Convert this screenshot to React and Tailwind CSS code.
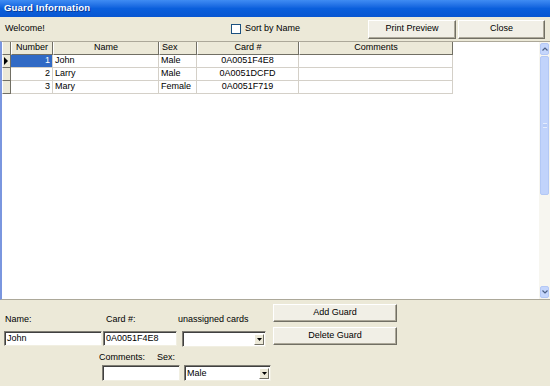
import { useState } from "react";

const guards = [
  { number: 1, name: "John", sex: "Male", card: "0A0051F4E8", comments: "" },
  { number: 2, name: "Larry", sex: "Male", card: "0A0051DCFD", comments: "" },
  { number: 3, name: "Mary", sex: "Female", card: "0A0051F719", comments: "" },
];

function Button({ children, className = "" }) {
  return (
    <button
      className={`flex items-center justify-center bg-[#f1efe6] border border-t-white border-l-white border-r-[#716f64] border-b-[#716f64] shadow-[inset_-1px_-1px_0_#aca899] text-black ${className}`}
    >
      {children}
    </button>
  );
}

function TextBox({ value, className = "" }) {
  return (
    <div
      className={`h-[15px] bg-white border border-t-[#7f7d74] border-l-[#7f7d74] border-r-[#f1efe2] border-b-[#f1efe2] shadow-[inset_1px_1px_0_#404040] pl-[2px] flex items-center leading-none ${className}`}
    >
      {value}
    </div>
  );
}

function Combo({ value, className = "" }) {
  return (
    <div
      className={`h-[16px] bg-white border border-t-[#7f7d74] border-l-[#7f7d74] border-r-[#f1efe2] border-b-[#f1efe2] shadow-[inset_1px_1px_0_#404040] flex items-center leading-none ${className}`}
    >
      <span className="flex-1 pl-[2px]">{value}</span>
      <span className="w-[10px] h-[11px] mr-[1px] bg-[#ece9d8] border border-t-white border-l-white border-r-[#716f64] border-b-[#716f64] flex items-center justify-center">
        <svg width="5" height="3" viewBox="0 0 5 3">
          <path d="M0 0h5L2.5 3z" fill="#000" />
        </svg>
      </span>
    </div>
  );
}

function HeaderCell({ children, w, align = "center" }) {
  return (
    <div
      className={`${w} h-full flex items-center px-[2px] bg-[#ece9d8] border-l border-l-white border-r border-r-[#716f64] border-b border-b-[#716f64] ${
        align === "left" ? "justify-start" : "justify-center"
      }`}
    >
      {children}
    </div>
  );
}

export default function App() {
  const [sortByName, setSortByName] = useState(false);

  return (
    <div
      className="w-[550px] h-[386px] bg-[#ece9d8] overflow-hidden flex flex-col text-[9px] text-black"
      style={{ fontFamily: '"Liberation Sans", Arial, sans-serif' }}
    >
      {/* Title bar */}
      <div className="h-[17px] shrink-0 bg-gradient-to-b from-[#3f8cf3] via-[#0a5fdc] to-[#0856d1] flex items-center pl-[4px]">
        <span className="text-white font-bold text-[9.5px] tracking-[0.2px] [text-shadow:1px_1px_0_#0b3a96]">
          Guard Information
        </span>
      </div>

      {/* Toolbar */}
      <div className="h-[24px] shrink-0 flex items-center">
        <span className="ml-[5px] w-[226px]">Welcome!</span>
        <label className="flex items-center gap-[3px] w-[137px]">
          <span
            onClick={() => setSortByName(!sortByName)}
            className="w-[10px] h-[10px] bg-white border border-[#1c5180] flex items-center justify-center"
          >
            {sortByName && (
              <svg width="7" height="6" viewBox="0 0 7 6">
                <path d="M0 3l2 2 5-5" stroke="#21a121" strokeWidth="1.5" fill="none" />
              </svg>
            )}
          </span>
          <span className="ml-[1px]">Sort by Name</span>
        </label>
        <Button className="w-[88px] h-[19px]">Print Preview</Button>
        <Button className="w-[87px] h-[19px] ml-[2px]">Close</Button>
      </div>

      {/* Grid */}
      <div className="h-[259px] shrink-0 flex bg-white border-l-2 border-l-[#7a96df] border-t border-t-[#aca899] border-b border-b-[#aca899]">
        <div className="flex-1 flex flex-col">
          <div className="h-[13px] flex">
            <HeaderCell w="w-[9px]" />
            <HeaderCell w="w-[42px]">Number</HeaderCell>
            <HeaderCell w="w-[106px]">Name</HeaderCell>
            <HeaderCell w="w-[38px]" align="left">Sex</HeaderCell>
            <HeaderCell w="w-[102px]">Card #</HeaderCell>
            <HeaderCell w="w-[154px]">Comments</HeaderCell>
          </div>
          {guards.map((g, i) => (
            <div key={g.number} className="h-[13px] flex">
              <div className="w-[9px] h-full bg-[#ece9d8] border-l border-l-white border-r border-r-[#716f64] border-b border-b-[#716f64] flex items-center">
                {i === 0 && (
                  <svg width="5" height="8" viewBox="0 0 5 8" className="ml-[1px]">
                    <path d="M0 0l4 4-4 4z" fill="#000" />
                  </svg>
                )}
              </div>
              <div
                className={`w-[42px] h-full flex items-center justify-end pr-[2px] border-r border-b border-[#d4d0c8] ${
                  i === 0 ? "bg-[#316ac5] text-white" : ""
                }`}
              >
                {g.number}
              </div>
              <div className="w-[106px] h-full flex items-center pl-[2px] border-r border-b border-[#d4d0c8]">
                {g.name}
              </div>
              <div className="w-[38px] h-full flex items-center pl-[2px] border-r border-b border-[#d4d0c8]">
                {g.sex}
              </div>
              <div className="w-[102px] h-full flex items-center justify-center border-r border-b border-[#d4d0c8]">
                {g.card}
              </div>
              <div className="w-[154px] h-full flex items-center pl-[2px] border-r border-b border-[#d4d0c8]">
                {g.comments}
              </div>
            </div>
          ))}
        </div>

        {/* Scrollbar */}
        <div className="w-[11px] h-full flex flex-col bg-[#f7f6f0]">
          <div className="h-[12px] m-[1px] mb-0 rounded-[2px] bg-[#c5d6fc] border border-[#b4c8f6] flex items-center justify-center">
            <svg width="6" height="4" viewBox="0 0 6 4">
              <path d="M0.5 3.5L3 1l2.5 2.5" stroke="#4d6185" strokeWidth="1.2" fill="none" />
            </svg>
          </div>
          <div className="h-[139px] mx-[1px] mt-[1px] rounded-[2px] bg-[#c1d3fb] border border-[#b3c8f5] flex items-center justify-center">
            <div className="w-[4px] h-[5px] border-y border-[#e4ecfd] bg-[#b9cdf8]" />
          </div>
          <div className="flex-1" />
          <div className="h-[12px] m-[1px] mt-0 rounded-[2px] bg-[#c5d6fc] border border-[#b4c8f6] flex items-center justify-center">
            <svg width="6" height="4" viewBox="0 0 6 4">
              <path d="M0.5 0.5L3 3l2.5-2.5" stroke="#4d6185" strokeWidth="1.2" fill="none" />
            </svg>
          </div>
        </div>
      </div>

      {/* Edit panel */}
      <div className="flex-1 flex">
        <div className="w-[273px] flex flex-col">
          <div className="h-[10px] mt-[15px] flex items-center">
            <span className="ml-[5px] w-[101px]">Name:</span>
            <span className="w-[72px]">Card #:</span>
            <span>unassigned cards</span>
          </div>
          <div className="flex mt-[6px]">
            <TextBox value="John" className="ml-[4px] w-[98px]" />
            <TextBox value="0A0051F4E8" className="ml-[1px] w-[74px]" />
            <Combo className="ml-[5px] w-[84px]" />
          </div>
          <div className="h-[10px] mt-[6px] flex items-center">
            <span className="ml-[99px] w-[58px]">Comments:</span>
            <span>Sex:</span>
          </div>
          <div className="flex mt-[2px]">
            <TextBox className="ml-[102px] w-[78px] h-[16px]" />
            <Combo value="Male" className="ml-[4px] w-[87px]" />
          </div>
        </div>
        <div className="flex flex-col">
          <Button className="w-[124px] h-[18px] mt-[4px]">Add Guard</Button>
          <Button className="w-[124px] h-[18px] mt-[5px]">Delete Guard</Button>
        </div>
      </div>
    </div>
  );
}
